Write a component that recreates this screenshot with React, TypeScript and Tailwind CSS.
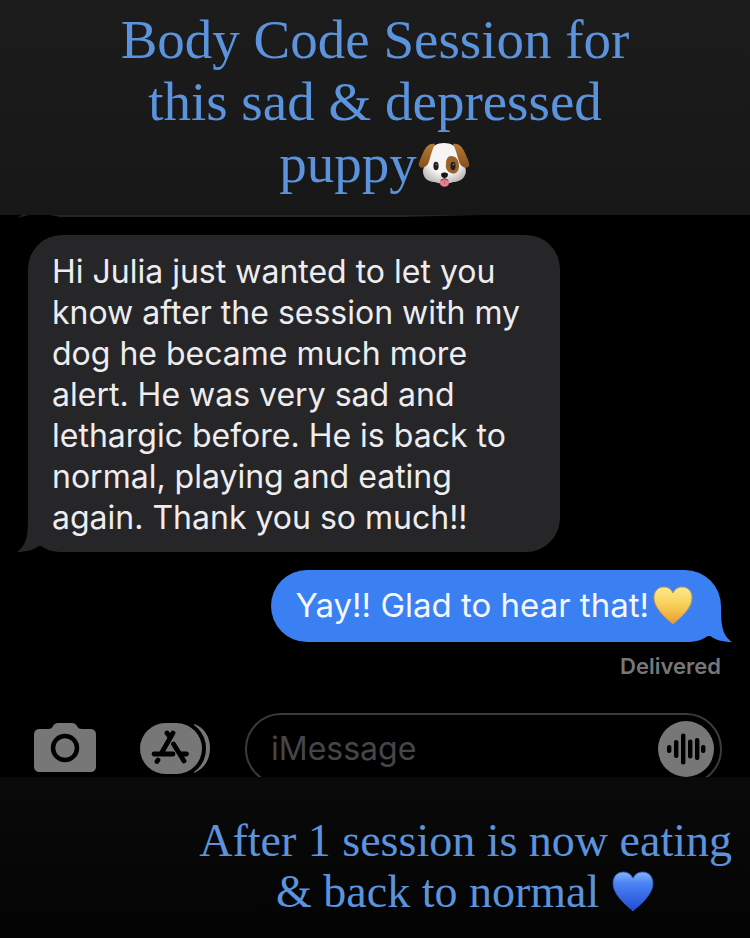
import type { ReactNode } from "react";

function DogEmoji() {
  return (
    <svg viewBox="0 0 54 48" className="h-12 w-[54px] shrink-0" role="img" aria-label="dog">
      <defs>
        <radialGradient id="dog-face" cx="0.5" cy="0.35" r="0.65">
          <stop offset="0.6" stopColor="#f6f5f4" />
          <stop offset="1" stopColor="#bdb9b8" />
        </radialGradient>
        <linearGradient id="dog-ear" x1="0" y1="0" x2="0" y2="1">
          <stop offset="0" stopColor="#b77a38" />
          <stop offset="1" stopColor="#86501c" />
        </linearGradient>
      </defs>
      <path
        d="M27 3C34 3 39 6 42 12C44 17 45 22 48 27C51 34 46 41 38 42C34 42 32 44 27 44C22 44 20 42 16 42C8 41 4 34 7 27C10 22 10 17 12 12C15 6 20 3 27 3Z"
        fill="url(#dog-face)"
      />
      <path
        d="M18 4C13 3 9 6 6 13C4 18 1 23 2 26C4 29 8 28 11 24C13 20 14 12 18 4Z"
        fill="url(#dog-ear)"
      />
      <path
        d="M36 4C41 3 45 6 48 13C50 18 53 23 52 26C50 29 46 28 43 24C41 20 40 12 36 4Z"
        fill="url(#dog-ear)"
      />
      <path
        d="M34 16C39 16 42 20 42 26C42 32 38 35 34 33C31 32 28 29 29 24C29 19 31 16 34 16Z"
        fill="#9a632b"
      />
      <ellipse cx="19" cy="26" rx="2.6" ry="4.2" fill="#242020" />
      <ellipse cx="36" cy="26" rx="2.6" ry="4.2" fill="#242020" />
      <circle cx="19.5" cy="24.5" r="0.8" fill="#8c8582" />
      <circle cx="36.5" cy="24.5" r="0.8" fill="#8c8582" />
      <path d="M23 40C26 38 29 38 32 40V43C32 48 23 48 23 43Z" fill="#e5808f" />
      <path d="M27.5 41V44" stroke="#bd5265" strokeWidth="0.8" />
      <path d="M27.5 37V39M24 40C26 40 27 39 27.5 38C28 39 29 40 31 40" fill="none" stroke="#4b3c39" strokeWidth="1" />
      <path d="M24 34C25 32 30 32 31 34C31 37 29 38 27.5 38C26 38 24 37 24 34Z" fill="#1b1717" />
    </svg>
  );
}

const HEART =
  "M20 38C18 36 1 24 1 12C1 5 5 1 11 1C15 1 18 3 20 7C22 3 25 1 29 1C35 1 39 5 39 12C39 24 22 36 20 38Z";

function YellowHeart() {
  return (
    <svg viewBox="0 0 40 40" className="size-10 shrink-0" role="img" aria-label="yellow heart">
      <defs>
        <linearGradient id="heart-yellow" x1="0" y1="0" x2="0" y2="1">
          <stop offset="0" stopColor="#fbe88c" />
          <stop offset="0.45" stopColor="#f8d35b" />
          <stop offset="1" stopColor="#e99b32" />
        </linearGradient>
      </defs>
      <path d={HEART} fill="url(#heart-yellow)" stroke="#c69a55" strokeWidth="1" />
    </svg>
  );
}

function BlueHeart() {
  return (
    <svg viewBox="0 0 40 40" className="h-[42px] w-11 shrink-0" role="img" aria-label="blue heart">
      <defs>
        <linearGradient id="heart-blue" x1="0" y1="0" x2="0" y2="1">
          <stop offset="0" stopColor="#83b5fa" />
          <stop offset="0.3" stopColor="#4a82f2" />
          <stop offset="1" stopColor="#214bd8" />
        </linearGradient>
      </defs>
      <path d={HEART} fill="url(#heart-blue)" stroke="#3260c4" strokeWidth="0.8" />
    </svg>
  );
}

function CameraIcon() {
  return (
    <svg viewBox="0 0 62 49" className="h-[49px] w-[62px]" aria-hidden="true">
      <path
        d="M6 6H14C17 6 18 5 19 3C20 1 22 0 24 0H38C40 0 42 1 43 3C44 5 45 6 48 6H56C60 6 62 8 62 12V43C62 47 60 49 56 49H6C2 49 0 47 0 43V12C0 8 2 6 6 6Z"
        fill="#777777"
      />
      <circle cx="31" cy="25" r="12" fill="none" stroke="#000000" strokeWidth="4.5" />
    </svg>
  );
}

function AppStoreIcon() {
  return (
    <svg viewBox="0 0 71 51" className="h-[51px] w-[71px]" aria-hidden="true">
      <path d="M54 1C64 4 70 14 70 25C70 37 64 46 54 50Z" fill="#777777" />
      <rect x="-1" y="-3" width="67" height="57" rx="28" fill="#000000" />
      <rect width="62" height="51" rx="25.5" fill="#777777" />
      <g fill="none" stroke="#000000" strokeWidth="4.8" strokeLinecap="round">
        <path d="M33 10L21.500 30M27 10L30 14M33.500 21L44 38M14 31H33M41 31H46.500M18 37L17 38.500" />
      </g>
    </svg>
  );
}

const BARS = [
  { x: 11, h: 8 },
  { x: 18, h: 18 },
  { x: 25, h: 31 },
  { x: 32, h: 19 },
  { x: 39, h: 22 },
  { x: 45, h: 8 },
];

function AudioIcon() {
  return (
    <svg viewBox="0 0 56 56" className="size-14" aria-hidden="true">
      <circle cx="28" cy="28" r="28" fill="#777777" />
      {BARS.map((b) => (
        <rect key={b.x} x={b.x - 2} y={28 - b.h / 2} width="4.4" height={b.h} rx="2" fill="#000000" />
      ))}
    </svg>
  );
}

// Covers the rounded bottom corner of a bubble and draws the tail in its place.
function Tail({ className }: { className: string }) {
  return (
    <svg viewBox="0 0 44 36" className={`absolute bottom-0 h-9 w-11 ${className}`} aria-hidden="true">
      <path d="M0 30H32V36H0Z" fill="#000000" />
      <path d="M32 0C32 19 33 29 43 36C34 36 26 34 20 29C14 34 7 36 -4 36V0Z" fill="currentColor" />
    </svg>
  );
}

function Sent({ children }: { children: ReactNode }) {
  return (
    <div className="relative flex h-[72px] items-center gap-1 self-end rounded-l-[36px] rounded-tr-[36px] bg-[#3a80f2] pr-7 pl-6 text-[#f4f7fd]">
      <Tail className="-right-3 text-[#3a80f2]" />
      {children}
    </div>
  );
}

export default function App() {
  return (
    <div className="flex min-h-screen flex-col bg-[#060608] font-['Inter',sans-serif]">
      <header className="bg-linear-to-b from-[#1c1c1d] to-[#171718] pt-[9px] pb-5">
        <h1 className="flex flex-col items-center font-['Liberation_Serif',serif] text-[55px] leading-[62px] text-[#5b93dc]">
          <span className="whitespace-nowrap">Body Code Session for</span>
          <span className="whitespace-nowrap">this sad &amp; depressed</span>
          <span className="flex items-center whitespace-nowrap">
            puppy
            <DogEmoji />
          </span>
        </h1>
      </header>

      <main className="flex flex-col bg-black">
        {/* bottom edge of the previous bubble */}
        <svg viewBox="0 0 750 4" className="h-1 w-full" aria-hidden="true">
          <path d="M50 0H480L400 2H60ZM22 0H29L17 3Z" fill="#252529" />
        </svg>

        <div className="mt-4 flex flex-col pr-[29px] pl-7">
          <div className="relative w-[532px] max-w-full self-start rounded-t-[34px] rounded-br-[34px] bg-[#262629] pt-4 pr-5 pb-[14px] pl-6 text-[32px] leading-[41px] text-[#ededf0]">
            <Tail className="-left-3 -scale-x-100 text-[#262629]" />
            <p className="relative">
              Hi Julia just wanted to let you know after the session with my dog he became much more
              alert. He was very sad and lethargic before. He is back to normal, playing and eating
              again. Thank you so much!!
            </p>
          </div>

          <div className="mt-[18px] flex flex-col">
            <Sent>
              <p className="relative text-[33px] whitespace-nowrap">Yay!! Glad to hear that!</p>
              <span className="relative">
                <YellowHeart />
              </span>
            </Sent>
          </div>
          <p className="mt-2 self-end text-[22px] leading-8 font-semibold text-[#77777b]">Delivered</p>
        </div>

        <form
          className="mt-[31px] flex h-16 items-start overflow-hidden pr-7 pl-[34px]"
          onSubmit={(e) => e.preventDefault()}
        >
          <button type="button" aria-label="Camera" className="mt-[10px] shrink-0">
            <CameraIcon />
          </button>
          <button type="button" aria-label="Apps" className="mt-[10px] ml-11 shrink-0">
            <AppStoreIcon />
          </button>
          <div className="ml-[34px] flex h-[72px] min-w-0 flex-1 items-center rounded-full border-2 border-[#3b3b3d] pr-[6px] pl-6">
            <input
              aria-label="Message"
              placeholder="iMessage"
              className="min-w-0 flex-1 bg-transparent text-[32px] text-[#ededf0] outline-none placeholder:text-[#464649]"
            />
            <button type="button" aria-label="Record audio" className="shrink-0">
              <AudioIcon />
            </button>
          </div>
        </form>
      </main>

      <footer className="flex flex-1 flex-col items-end bg-linear-to-b from-[#0a0a0b] to-[#040405] pt-[38px] pr-[18px] font-['Liberation_Serif',serif] text-[46px] leading-[51px] text-[#5b93dc]">
        <p className="flex flex-col items-center whitespace-nowrap">
          <span>After 1 session is now eating</span>
          <span className="flex items-center gap-3">
            &amp; back to normal
            <BlueHeart />
          </span>
        </p>
      </footer>
    </div>
  );
}
